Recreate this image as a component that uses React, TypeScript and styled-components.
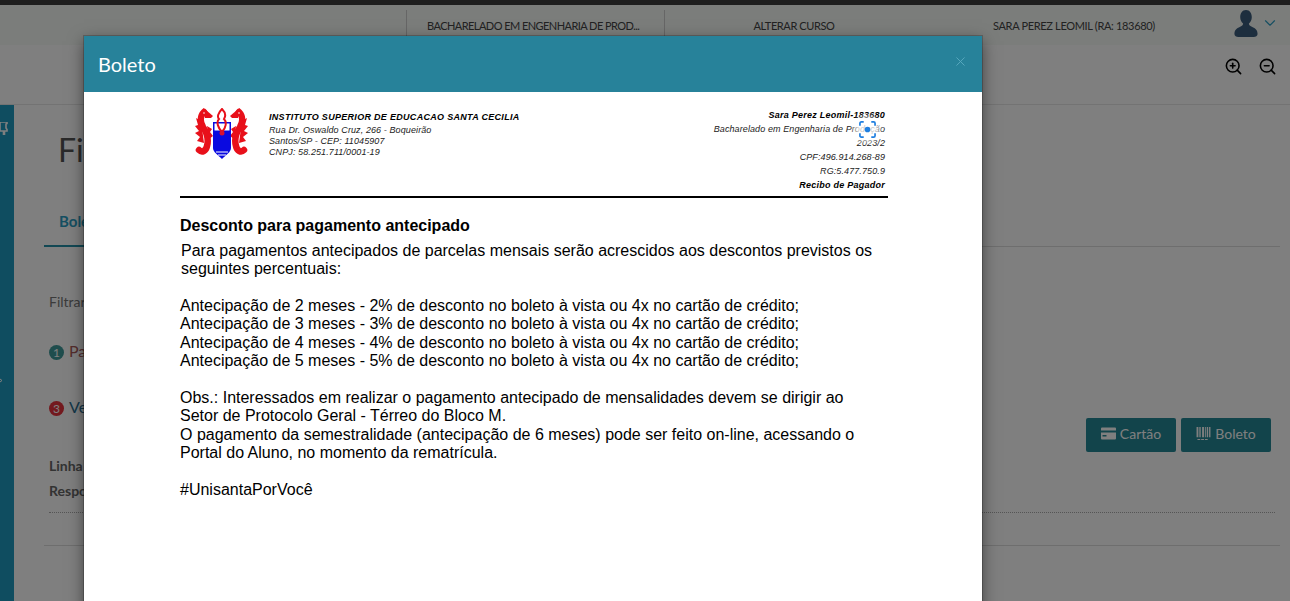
import React from "react"
import styled, { createGlobalStyle } from "styled-components"
import { ChevronDown, ZoomIn, ZoomOut, X } from "lucide-react"

const Global = createGlobalStyle`
    html, body { margin: 0; padding: 0; height: 100%; overflow: hidden; background: #fff; }
    body { font-family: "Lato", "Open Sans", sans-serif; color: #555; }
    #root { height: 100%; }
`

const Seahorse = () => (
    <g>
        <path d="M9 4 C5 8 5 14 8 19 C12 25 14 31 12 38 C11 43 7 45 4 42" fill="none" stroke="#e8101a" strokeWidth="6.5" strokeLinecap="round" />
        <path d="M8 0 L11 2 L18 8 L16 10 L10 10 Z" fill="#e8101a" />
        <path d="M6 13 L1 10 L3 17 L0 18 L4 23 L0 25 L5 29 L2 33 L9 35 Z" fill="#e8101a" />
        <path d="M12 18 L17 21 L15 24 L18 28 L14 31 Z" fill="#e8101a" />
        <circle cx="9" cy="5" r="0.8" fill="#fff" />
    </g>
)

const Logo = () => (
    <LogoSvg viewBox="0 0 54 52">
        <Seahorse />
        <g transform="translate(53 0) scale(-1 1)">
            <Seahorse />
        </g>
        <path d="M18 14 H36 V40 C36 44 31 47 27 51 C23 47 18 44 18 40 Z" fill="#0a0ae0" />
        <rect x="19.5" y="15.5" width="15" height="7" fill="#fff" />
        <path d="M21 44 H33 M23 47 H31" stroke="#fff" strokeWidth="1" />
        <path d="M27 1 C23 5 22 9 24 11 C21 14 23 20 27 24 C31 20 32 14 29 11 C31 8 30 4 27 1 Z" fill="none" stroke="#e8101a" strokeWidth="2" />
        <circle cx="27" cy="25" r="2.5" fill="#d81030" />
    </LogoSvg>
)

const LensIcon = () => (
    <LensSvg viewBox="0 0 18 18">
        <path d="M1 5 V2.500 Q1 1 2.500 1 H5 M13 1 H15.500 Q17 1 17 2.500 V5 M17 13 V15.500 Q17 17 15.500 17 H13 M5 17 H2.500 Q1 17 1 15.500 V13" fill="none" stroke="#1f7fe0" strokeWidth="1.800" />
        <circle cx="9" cy="9" r="3" fill="#1f7fe0" />
    </LensSvg>
)

const CardIcon = () => (
    <ActionSvg viewBox="0 0 15 12">
        <path d="M0 1a1 1 0 0 1 1-1h13a1 1 0 0 1 1 1v2H0zM0 5h15v6a1 1 0 0 1-1 1H1a1 1 0 0 1-1-1zM1.500 7.500v1.500h4V7.500z" fill="currentColor" fillRule="evenodd" />
    </ActionSvg>
)

const BarcodeIcon = () => (
    <ActionSvg viewBox="0 0 15 14">
        <path d="M0 0h2v11H0zM3 0h1.500v11H3zM6 0h2v11H6zM9 0h1v11H9zM11 0h1.500v11H11zM13.500 0h1.500v11h-1.500zM1 13h3v1H1zM5 13h3v1H5zM9 13h3v1H9z" fill="currentColor" />
    </ActionSvg>
)

const UserIcon = () => (
    <UserSvg viewBox="0 0 24 28">
        <path d="M12 0 C16 0 18 3.500 18 7.500 C18 10.500 16.500 13 15 14 C15 15.500 16 16.500 19 18 C22 19.500 24 21 24 25 C24 27 22 28 20 28 H4 C2 28 0 27 0 25 C0 21 2 19.500 5 18 C8 16.500 9 15.500 9 14 C7.500 13 6 10.500 6 7.500 C6 3.500 8 0 12 0 Z" fill="#3b5c7c" />
    </UserSvg>
)

export default function App() {
    return (
        <Page>
            <Global />
            <TopStrip />
            <Header>
                <CourseCell>BACHARELADO EM ENGENHARIA DE PROD...</CourseCell>
                <ChangeCell>ALTERAR CURSO</ChangeCell>
                <NameCell>SARA PEREZ LEOMIL (RA: 183680)</NameCell>
                <UserCell>
                    <UserIcon />
                    <ChevronDown size={18} strokeWidth={1.5} color="#2b9ec4" />
                </UserCell>
            </Header>
            <Toolbar>
                <ZoomIn size={19} color="#000" />
                <ZoomOut size={19} color="#000" />
            </Toolbar>
            <Main>
                <Sidebar>
                    <PinGlyph viewBox="0 0 8 13">
                        <path d="M0 0h7v1.500L6 2v4l1 1.500V9H4.500v4h-1V9H0V0z" fill="none" stroke="#fff" strokeWidth="1.600" />
                    </PinGlyph>
                    <CaretGlyph viewBox="0 0 3 5">
                        <path d="M0 1l2 1.500L0 4" fill="none" stroke="#fff" strokeWidth="1" />
                    </CaretGlyph>
                </Sidebar>
                <Content>
                    <Title>Financeiro</Title>
                    <Tabs>
                        <ActiveTab>Boletos</ActiveTab>
                    </Tabs>
                    <Section>
                        <Columns>
                            <div>
                                <FilterLabel>Filtrar</FilterLabel>
                                <StatusRow $first>
                                    <Badge $color="#3f9a9a">1</Badge>
                                    <StatusText $color="#a85a5a">Pago</StatusText>
                                </StatusRow>
                                <StatusRow>
                                    <Badge $color="#e6323c">3</Badge>
                                    <StatusText $color="#2b6f92">Vencido</StatusText>
                                </StatusRow>
                                <InfoBlock>
                                    <InfoLine>Linha digitável</InfoLine>
                                    <InfoLine>Responsável</InfoLine>
                                </InfoBlock>
                            </div>
                            <ActionRow>
                                <Action>
                                    <CardIcon />
                                    Cartão
                                </Action>
                                <Action>
                                    <BarcodeIcon />
                                    Boleto
                                </Action>
                            </ActionRow>
                        </Columns>
                        <DottedRule />
                    </Section>
                    <SolidRule />
                </Content>
            </Main>
            <Backdrop />
            <Modal>
                <ModalHeader>
                    <ModalTitle>Boleto</ModalTitle>
                    <CloseButton>
                        <X size={15} strokeWidth={1.5} />
                    </CloseButton>
                </ModalHeader>
                <Document>
                    <DocHeader>
                        <Logo />
                        <Institute>
                            <InstituteName>INSTITUTO SUPERIOR  DE EDUCACAO SANTA CECILIA</InstituteName>
                            <span>Rua Dr. Oswaldo Cruz, 266 - Boqueirão</span>
                            <span>Santos/SP - CEP: 11045907</span>
                            <span>CNPJ: 58.251.711/0001-19</span>
                        </Institute>
                        <Student>
                            <StudentStrong>Sara Perez Leomil-183680</StudentStrong>
                            <span>Bacharelado em Engenharia de Produção</span>
                            <span>2023/2</span>
                            <span>CPF:496.914.268-89</span>
                            <span>RG:5.477.750.9</span>
                            <StudentStrong>Recibo de Pagador</StudentStrong>
                            <LensGlow>
                                <LensIcon />
                            </LensGlow>
                        </Student>
                    </DocHeader>
                    <Heading>Desconto para pagamento antecipado</Heading>
                    <Intro>
                        Para pagamentos antecipados de parcelas mensais serão acrescidos aos descontos previstos os<br />
                        seguintes percentuais:
                    </Intro>
                    <Paragraph>
                        Antecipação de 2 meses - 2% de desconto no boleto à vista ou 4x no cartão de crédito;<br />
                        Antecipação de 3 meses - 3% de desconto no boleto à vista ou 4x no cartão de crédito;<br />
                        Antecipação de 4 meses - 4% de desconto no boleto à vista ou 4x no cartão de crédito;<br />
                        Antecipação de 5 meses - 5% de desconto no boleto à vista ou 4x no cartão de crédito;
                    </Paragraph>
                    <Paragraph>
                        Obs.: Interessados em realizar o pagamento antecipado de mensalidades devem se dirigir ao<br />
                        Setor de Protocolo Geral - Térreo do Bloco M.<br />
                        O pagamento da semestralidade (antecipação de 6 meses) pode ser feito on-line, acessando o<br />
                        Portal do Aluno, no momento da rematrícula.
                    </Paragraph>
                    <Paragraph>#UnisantaPorVocê</Paragraph>
                </Document>
            </Modal>
        </Page>
    )
}

const Page = styled.div`
    position: relative;
    display: flex;
    flex-direction: column;
    width: 1290px;
    height: 601px;
    overflow: hidden;
    background: #fff;
`

const TopStrip = styled.div`
    height: 5px;
    background: #3c3c3c;
    flex-shrink: 0;
`

const Header = styled.header`
    display: flex;
    align-items: center;
    height: 40px;
    padding-left: 406px;
    background: #f6faf6;
    flex-shrink: 0;
    font-size: 11px;
    letter-spacing: -0.4px;
    color: #444;
`

const CourseCell = styled.div`
    width: 258px;
    height: 30px;
    box-sizing: border-box;
    padding-left: 20px;
    display: flex;
    align-items: center;
    border-left: 1px solid #ccc;
    letter-spacing: -0.55px;
    white-space: nowrap;
`

const ChangeCell = styled.div`
    width: 259px;
    height: 30px;
    display: flex;
    align-items: center;
    justify-content: center;
    border-left: 1px solid #ccc;
    box-sizing: border-box;
`

const NameCell = styled.div`
    width: 311px;
    padding-left: 70px;
    box-sizing: border-box;
    letter-spacing: -0.33px;
    white-space: nowrap;
`

const UserCell = styled.div`
    display: flex;
    align-items: center;
    gap: 3px;
    margin-top: -4px;
`

const UserSvg = styled.svg`
    width: 24px;
    height: 27px;
    display: block;
`

const Toolbar = styled.div`
    display: flex;
    align-items: center;
    justify-content: flex-end;
    gap: 15px;
    height: 60px;
    padding: 0 13px 16px 0;
    box-sizing: border-box;
    background: #fff;
    border-bottom: 1px solid #e6e6e6;
    flex-shrink: 0;
`

const Main = styled.main`
    display: flex;
    flex: 1;
    min-height: 0;
`

const Sidebar = styled.aside`
    width: 14px;
    flex-shrink: 0;
    background: #1e9ac0;
    display: flex;
    flex-direction: column;
    align-items: flex-start;
    overflow: hidden;
`

const PinGlyph = styled.svg`
    width: 8px;
    height: 13px;
    margin-top: 17px;
`

const CaretGlyph = styled.svg`
    width: 3px;
    height: 5px;
    margin-top: 243px;
`

const Content = styled.div`
    flex: 1;
    padding: 0 10px 0 30px;
    display: flex;
    flex-direction: column;
`

const Title = styled.h1`
    margin: 24px 0 0 14px;
    font-size: 32px;
    line-height: 42px;
    font-weight: 400;
    color: #555;
`

const Tabs = styled.nav`
    display: flex;
    margin-top: 26px;
    height: 50px;
    box-sizing: border-box;
    border-bottom: 1px solid #ddd;
`

const ActiveTab = styled.div`
    padding: 15px 15px 0;
    font-size: 15px;
    font-weight: 700;
    color: #2b9ec4;
    border-bottom: 2px solid #2590a8;
    height: 50px;
    box-sizing: border-box;
`

const Section = styled.section`
    display: flex;
    flex-direction: column;
    padding: 0 5px;
`

const Columns = styled.div`
    display: flex;
    justify-content: space-between;
    align-items: flex-start;
`

const FilterLabel = styled.div`
    margin-top: 45px;
    font-size: 14px;
    line-height: 20px;
    color: #777;
`

const StatusRow = styled.div<{ $first?: boolean }>`
    display: flex;
    align-items: flex-start;
    gap: 5px;
    margin-top: ${({ $first }) => ($first ? "30px" : "36px")};
    height: 20px;
`

const Badge = styled.span<{ $color: string }>`
    width: 15px;
    height: 15px;
    margin-top: 3px;
    border-radius: 50%;
    background: ${({ $color }) => $color};
    color: #fff;
    font-size: 12px;
    line-height: 15px;
    text-align: center;
`

const StatusText = styled.span<{ $color: string }>`
    font-size: 16px;
    line-height: 18px;
    color: ${({ $color }) => $color};
`

const InfoBlock = styled.div`
    margin-top: 35px;
`

const InfoLine = styled.div`
    font-size: 14px;
    line-height: 25px;
    font-weight: 700;
    color: #666;
`

const ActionRow = styled.div`
    display: flex;
    gap: 5px;
    margin: 171px 4px 0 0;
`

const Action = styled.button`
    display: flex;
    align-items: center;
    justify-content: center;
    gap: 4px;
    width: 90px;
    height: 34px;
    padding: 0 0 3px;
    border: 0;
    border-radius: 2px;
    background: #258896;
    color: #fff;
    font-family: inherit;
    font-size: 14px;
`

const ActionSvg = styled.svg`
    width: 15px;
    height: 13px;
    margin-top: -1px;
`

const DottedRule = styled.div`
    margin-top: 9px;
    border-top: 1px dotted #aaa;
`

const SolidRule = styled.div`
    margin-top: 32px;
    border-top: 1px solid #ddd;
`

const Backdrop = styled.div`
    position: absolute;
    inset: 0;
    background: rgba(0, 0, 0, 0.5);
`

const Modal = styled.div`
    position: absolute;
    top: 36px;
    left: 84px;
    width: 898px;
    height: 600px;
    background: #fff;
    box-shadow: 0 5px 15px rgba(0, 0, 0, 0.5);
    outline: 1px solid rgba(0, 0, 0, 0.2);
`

const ModalHeader = styled.div`
    display: flex;
    align-items: center;
    justify-content: space-between;
    height: 56px;
    padding: 0 14px;
    background: #27829a;
`

const ModalTitle = styled.h4`
    margin: 0;
    font-size: 20px;
    font-weight: 400;
    color: #fff;
`

const CloseButton = styled.span`
    display: flex;
    margin-top: -6px;
    color: #5aaabf;
`

const Document = styled.div`
    display: flex;
    flex-direction: column;
    width: 708px;
    margin-left: 96px;
    padding-top: 16px;
    font-family: "Liberation Sans", Arial, sans-serif;
    font-size: 16px;
    line-height: 18.4px;
    color: #000;
`

const DocHeader = styled.div`
    display: flex;
    align-items: flex-start;
    height: 90px;
    padding: 0 3px 0 15px;
    box-sizing: border-box;
    border-bottom: 2px solid #000;
`

const LogoSvg = styled.svg`
    width: 54px;
    height: 52px;
    flex-shrink: 0;
`

const Institute = styled.div`
    display: flex;
    flex-direction: column;
    margin-left: 20px;
    padding-top: 2px;
    font-size: 9px;
    font-style: italic;
    line-height: 11px;
    letter-spacing: 0.1px;
    color: #222;
`

const InstituteName = styled.strong`
    line-height: 15px;
    letter-spacing: 0.3px;
    color: #000;
`

const Student = styled.div`
    position: relative;
    display: flex;
    flex-direction: column;
    align-items: flex-end;
    margin: 0 0 0 auto;
    font-size: 9px;
    font-style: italic;
    line-height: 14px;
    letter-spacing: 0.1px;
    color: #222;
    white-space: nowrap;
`

const StudentStrong = styled.strong`
    color: #000;
    letter-spacing: 0.25px;
`

const LensGlow = styled.div`
    position: absolute;
    top: 5px;
    right: 0;
    width: 36px;
    height: 32px;
    display: flex;
    align-items: center;
    justify-content: center;
    background: radial-gradient(circle, rgba(255, 255, 255, 0.75) 35%, rgba(255, 255, 255, 0) 72%);
`

const LensSvg = styled.svg`
    width: 17px;
    height: 17px;
`

const Heading = styled.h2`
    margin: 19.4px 0 0;
    font-size: 16px;
    line-height: 18.4px;
    font-weight: 700;
`

const Intro = styled.p`
    margin: 6px 0 0 1px;
`

const Paragraph = styled.p`
    margin: 18.4px 0 0;
`
